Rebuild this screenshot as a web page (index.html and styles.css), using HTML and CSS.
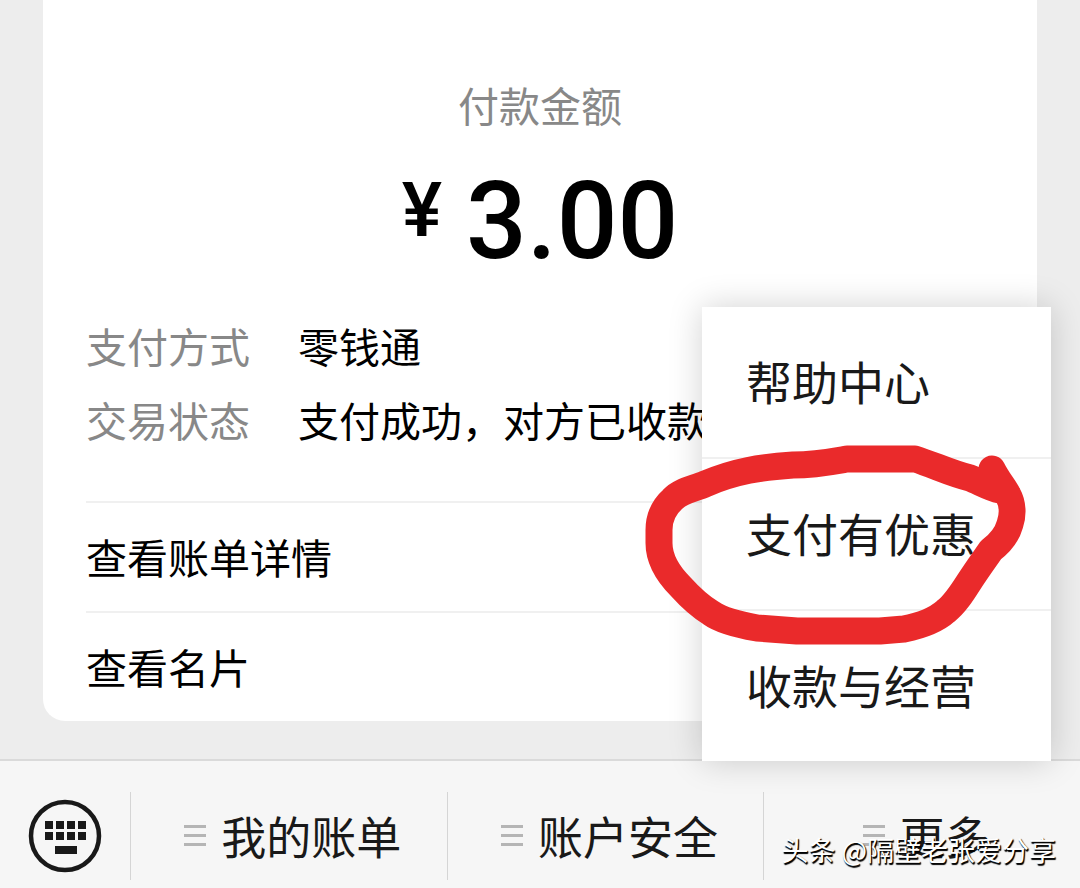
FILE: index.html
```
<!DOCTYPE html>
<html lang="zh-CN">
<head>
    <meta charset="UTF-8">
    <meta name="viewport" content="width=device-width, initial-scale=1.0">
    <title>支付凭证</title>
    <link rel="stylesheet" href="styles.css">
</head>
<body>

<main class="chat">
    <section class="card">
        <h1 class="card-title">付款金额</h1>
        <p class="amount"><span class="currency">¥</span><span>3.00</span></p>

        <dl class="details">
            <dt>支付方式</dt>
            <dd>零钱通</dd>
            <dt>交易状态</dt>
            <dd>支付成功，对方已收款</dd>
        </dl>

        <a class="card-link" href="#bill">查看账单详情</a>
        <a class="card-link" href="#profile">查看名片</a>
    </section>
</main>

<nav class="toolbar">
    <button class="keyboard" type="button" aria-label="键盘">
        <svg width="74" height="74" viewBox="0 0 74 74" aria-hidden="true">
            <circle cx="37" cy="37" r="34" fill="none" stroke="#191919" stroke-width="4.5"/>
            <g fill="#191919">
                <rect x="17" y="22" width="8" height="8"/>
                <rect x="28" y="22" width="8" height="8"/>
                <rect x="39" y="22" width="8" height="8"/>
                <rect x="50" y="22" width="8" height="8"/>
                <rect x="17" y="33" width="8" height="8"/>
                <rect x="28" y="33" width="8" height="8"/>
                <rect x="39" y="33" width="8" height="8"/>
                <rect x="50" y="33" width="8" height="8"/>
                <rect x="27" y="47" width="22" height="8"/>
            </g>
        </svg>
    </button>
    <button class="tab" type="button"><span class="bars"></span>我的账单</button>
    <button class="tab" type="button"><span class="bars"></span>账户安全</button>
    <button class="tab" type="button" aria-expanded="true"><span class="bars"></span>更多</button>

    <!-- popup for the last tab -->
    <ul class="menu">
        <li><a href="#help">帮助中心</a></li>
        <li>
            <a href="#offers">支付有优惠</a>
            <svg class="marker" width="400" height="210" viewBox="640 440 400 210" aria-hidden="true">
                <path fill="none" stroke="#ea2a2b" stroke-width="27" stroke-linecap="round" stroke-linejoin="round"
                    d="M992 469 C998 481 1004 487 1008 495 C1013 504 1013 515 1010 524 C1007 535 999 544 991 550 C984 560 976 571 969 582 C962 593 955 604 946 611 C936 620 919 626 904 629 L880 631 H797 L757 628 C740 625 722 621 711 613 C698 605 690 597 681 587 C668 574 659 560 659 543 V530 C659 517 664 507 673 499 C680 491 693 489 705 484 C735 471 762 467 793 465 C815 465 830 462 847 459 H915 C934 465 952 474 970 478 C980 482 990 488 1000 490"/>
            </svg>
        </li>
        <li><a href="#business">收款与经营</a></li>
    </ul>
</nav>

<div class="watermark">头条 @隔壁老张爱分享</div>

</body>
</html>
```
FILE: styles.css
```
* {
    box-sizing: border-box;
}
body {
    display: flex;
    flex-direction: column;
    position: relative;
    min-height: 100vh;
    margin: 0;
    background-color: #ededed;
    color: #000;
    font-family: "Noto Sans CJK SC", sans-serif;
    font-size: 41px;
    line-height: 60px;
}
a {
    color: inherit;
    text-decoration: none;
}
button {
    border: none;
    background: none;
    color: #191919;
    font: inherit;
    cursor: pointer;
}
.chat {
    flex: 1;
    padding: 0 43px 38px;
}
.card {
    padding: 74px 43px 0;
    background-color: #fff;
    border-radius: 0 0 22px 22px;
}
.card-title {
    margin: 0;
    color: #888;
    font-size: 41px;
    font-weight: normal;
    text-align: center;
}
.amount {
    display: flex;
    justify-content: center;
    gap: 24px;
    margin: 30px 0 28px;
    font-family: Roboto, sans-serif;
    font-size: 107px;
    font-weight: 500;
    line-height: 116px;
}
.currency {
    font-size: 76px;
    line-height: 92px;
}
.details {
    display: grid;
    grid-template-columns: max-content 1fr;
    gap: 14px 48px;
    margin: 0 0 52px;
    padding-top: 7px;
    white-space: nowrap;
}
.details dt {
    color: #888;
}
.details dd {
    margin: 0;
}
.card-link {
    display: block;
    padding: 23px 0 25px;
    border-top: 2px solid #f0f0f0;
}
.toolbar {
    display: flex;
    align-items: center;
    position: relative;
    height: 129px;
    padding-top: 22px;
    background-color: #f6f6f6;
    border-top: 2px solid #dadada;
    font-size: 45px;
}
.keyboard {
    display: flex;
    justify-content: center;
    width: 130px;
    padding: 0;
}
.tab {
    display: flex;
    flex: 1;
    align-items: center;
    justify-content: center;
    gap: 15px;
    height: 88px;
    padding: 0 0 0 8px;
    border-left: 1px solid #d5d5d5;
}
.bars {
    width: 22px;
    height: 21px;
    background: repeating-linear-gradient(#b5b5b5 0 3px, transparent 3px 9px);
}
.menu {
    position: absolute;
    right: 29px;
    bottom: 100%;
    width: 349px;
    margin: 0;
    padding: 0;
    background-color: #fff;
    box-shadow: 0 0 32px rgba(0, 0, 0, 0.18);
    color: #191919;
    font-size: 46px;
    list-style: none;
}
.menu li {
    position: relative;
}
.menu li + li {
    border-top: 2px solid #f0f0f0;
}
.menu a {
    display: block;
    padding: 43px 44px 47px;
}
/* hand-drawn ring, spills past the menu on the left */
.marker {
    position: absolute;
    z-index: 1;
    top: -19px;
    left: -62px;
    pointer-events: none;
}
.watermark {
    position: absolute;
    right: 24px;
    bottom: 18px;
    color: #fff;
    font-size: 27px;
    line-height: 40px;
    text-shadow: 1px 1px 1px #000, 1px 2px 1px #000;
}
```
